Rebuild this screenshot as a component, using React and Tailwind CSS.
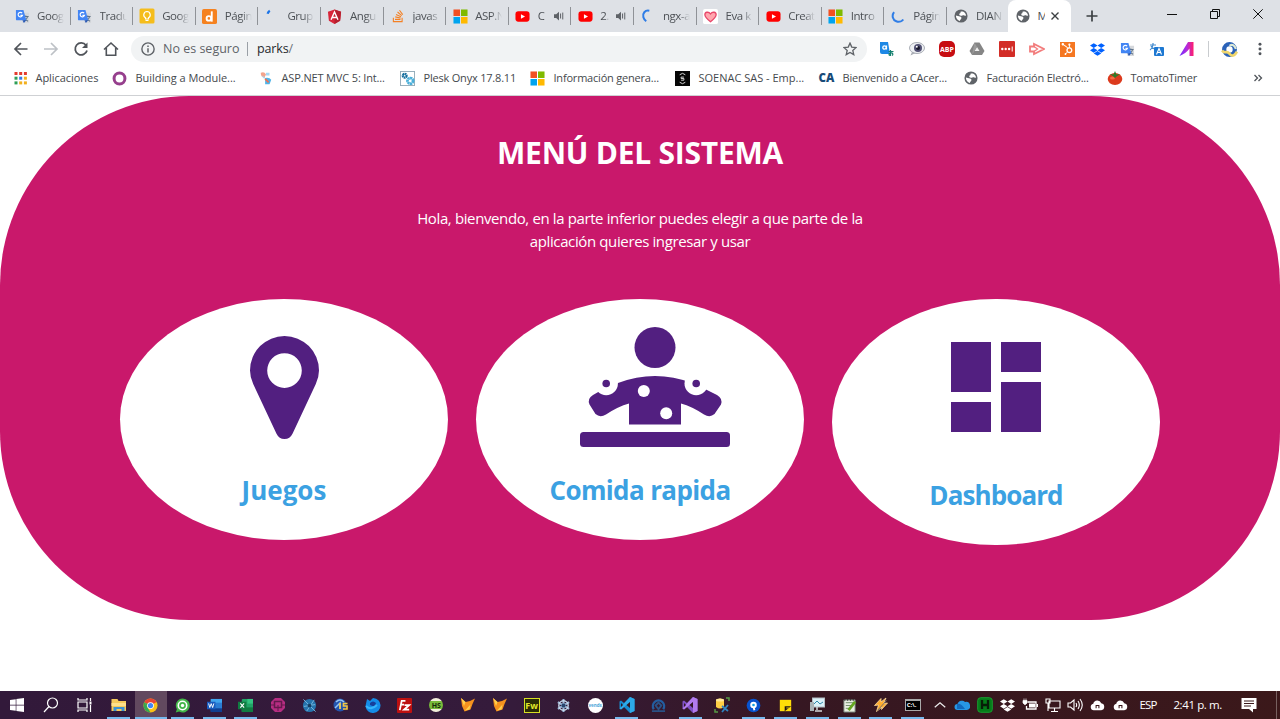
import React from "react";
import { FaWindows, FaDropbox, FaHubspot, FaStackOverflow } from "react-icons/fa";

function S({ w = 14, h, vb = "0 0 16 16", children }) {
  return (
    <svg width={w} height={h || w} viewBox={vb} className="block shrink-0" fill="none">
      {children}
    </svg>
  );
}

const GTranslate = () => (
  <S w={15}>
    <path d="M6 4h9v11H8z" fill="#d5d8dc" />
    <path d="M8.5 8h6M11.500 7v1.500M13.500 8c-.5 2.500-2 4-4 5M10 9.500c1 2 2.500 3 4 3.500" stroke="#607489" strokeWidth="1.200" />
    <path d="M1 1h8l3 11H1.500Q1 12 1 11z" fill="#4285f4" />
    <path d="M7.600 4.400A2.400 2.400 0 1 0 8 6.800H5.800" stroke="#fff" strokeWidth="1.200" />
    <path d="M8 12h4l-2.500 3z" fill="#2859b8" />
  </S>
);
const Keep = () => (
  <S w={16}>
    <rect x=".5" y=".5" width="15" height="15" rx="1.500" fill="#f5bd1c" />
    <path d="M8 3.500a3.300 3.300 0 0 0-1.500 6.200V11h3V9.700A3.300 3.300 0 0 0 8 3.500zM6.500 12.500h3" stroke="#fff" strokeWidth="1.200" />
  </S>
);
const OrangeD = () => (
  <S w={15}>
    <rect width="16" height="16" rx="2" fill="#f58220" />
    <circle cx="7.300" cy="10" r="2.400" stroke="#fff" strokeWidth="2" />
    <path d="M10.400 2.500v11" stroke="#fff" strokeWidth="2" />
  </S>
);
const BlueTick = () => (
  <S><path d="M3 5.500c.3-1.500 1-2.500 2.500-3.500" stroke="#1a73e8" strokeWidth="2.600" /></S>
);
const Angular = () => (
  <S w={15}>
    <path d="M8 .5l7 2.500-1 9.500L8 16l-6-3.500L1 3z" fill="#d8263a" />
    <path d="M8 .5l7 2.500-1 9.500L8 16z" fill="#b5202f" />
    <path d="M4.300 11.500L8 3.200l3.700 8.300M5.800 9h4.400" stroke="#fff" strokeWidth="1.500" />
  </S>
);
const Stack = () => <FaStackOverflow className="block size-[14px] text-[#f48024]" />;
const Microsoft = () => (
  <S w={15}>
    <path d="M.5.500h7v7h-7z" fill="#f25022" /><path d="M8.500.500h7v7h-7z" fill="#7fba00" />
    <path d="M.5 8.500h7v7h-7z" fill="#00a4ef" /><path d="M8.500 8.500h7v7h-7z" fill="#ffb900" />
  </S>
);
const YouTube = () => (
  <S w={15}>
    <rect x=".5" y="2.500" width="15" height="11" rx="3" fill="#f00" />
    <path d="M6.300 5.500v5L10.700 8z" fill="#fff" />
  </S>
);
const Spinner = () => (
  <S><path d="M9.500 2C4.500 1 1.500 5 2.700 9.500c.5 2 1.800 3.500 3.300 4.500" stroke="#2f7de6" strokeWidth="2.300" /></S>
);
const SpinnerLow = () => (
  <S><path d="M3.500 3.500c-3 4-1.500 9 2.500 10.500s7-.5 8-2" stroke="#2f7de6" strokeWidth="2.300" /></S>
);
const Heart = () => (
  <S w={15}>
    <rect width="16" height="16" rx="2" fill="#fff" />
    <path d="M8 13.500C4 10.500 2 8.500 2 6.200 2 3 6 2.500 8 5.200 10 2.500 14 3 14 6.200c0 2.300-2 4.300-6 7.300z" fill="#ffa6ae" stroke="#e8476a" strokeWidth="1.400" />
  </S>
);
const Globe = () => (
  <S w={14}>
    <circle cx="8" cy="8" r="7.500" fill="#5f6368" />
    <path d="M7.500 3.200C9 2.500 11 3 12.500 4.500c.8 1 1.200 2 1.200 3-1.200.8-1.700-.5-3-.5-1 0-1.200 1-2.700.8C6.500 7.500 5.800 7 6 5.500c.8-.3 1.700-.8 1.500-2.300zM2.200 7.500l4.600 1.200c1.500.3 2 1.300 1.500 2.300-.6 1-1.500 1-1.500 2.600C4 13 2 10.500 2.200 7.500z" fill="#fff" />
  </S>
);
const Speaker = () => (
  <S w={10} h={10}>
    <path d="M0 5h3.500l4.500-4v14l-4.500-4H0z" fill="#5f6368" />
    <path d="M10.500 4v8M14 2.500v11" stroke="#5f6368" strokeWidth="1.600" />
  </S>
);

const tabs = [
  [GTranslate, "Goog"], [GTranslate, "Tradu"], [Keep, "Goog"], [OrangeD, "Págin"], [BlueTick, "Grup"],
  [Angular, "Angu"], [Stack, "javas"], [Microsoft, "ASP.N"], [YouTube, "C", true], [YouTube, "2.", true],
  [Spinner, "ngx-a"], [Heart, "Eva k"], [YouTube, "Creat"], [Microsoft, "Intro"], [SpinnerLow, "Págin"], [Globe, "DIAN"],
];

function TabStrip() {
  return (
    <div className="flex h-8 bg-[#dee1e6] pl-2">
      {tabs.map(([Icon, label, sound], i) => (
        <div key={i} className="flex h-full w-[62.600px] shrink-0 items-center pl-[6px]">
          <span className="flex w-4 justify-center"><Icon /></span>
          <span className={(sound ? "w-[9px]" : "w-[27px]") + " ml-[7px] overflow-hidden whitespace-nowrap text-[11.500px] text-[#4d5156] tracking-[-0.450px] [mask-image:linear-gradient(to_right,black_60%,transparent)]"}>{label}</span>
          {sound && <span className="ml-[7px]"><Speaker /></span>}
          {i < 15 && <span className="ml-auto h-[18px] w-px bg-[#8f9297]" />}
        </div>
      ))}
      <div className="-ml-[2px] flex h-8 w-[63px] shrink-0 items-center rounded-t-lg bg-white pl-[8px]">
        <Globe />
        <span className="ml-2 w-[7px] overflow-hidden text-[11.500px] text-[#4d5156]">M</span>
        <span className="ml-[5px]"><S w={10} vb="0 0 10 10"><path d="M1.500 1.500l7 7m0-7l-7 7" stroke="#3c4043" strokeWidth="1.400" /></S></span>
      </div>
      <div className="flex flex-1 items-center pl-[15px]">
        <S w={12} vb="0 0 12 12"><path d="M6 .5v11M.5 6h11" stroke="#3c4043" strokeWidth="1.700" /></S>
        <div className="ml-auto flex items-center gap-[33px] pr-[17px] pb-[5px]">
          <S w={10} vb="0 0 10 10"><path d="M0 5.500h10" stroke="#111" /></S>
          <S w={10} vb="0 0 10 10"><path d="M.5 2.500h7v7h-7zM2.500 2.500v-2h7v7h-2" stroke="#111" /></S>
          <S w={10} vb="0 0 10 10"><path d="M.3.300l9.400 9.400m0-9.400L.3 9.700" stroke="#111" /></S>
        </div>
      </div>
    </div>
  );
}

const extensions = [
  <S key="0" w={16}><path d="M1 1h8l2 12H3Q1 13 1 11z" fill="#1e88e5" /><circle cx="5.500" cy="6.500" r="1.700" stroke="#fff" strokeWidth="1.300" /><path d="M7.500 4.500v4" stroke="#fff" strokeWidth="1.200" /><path d="M9.500 10.500h5M11.500 9v5.500c-2 0-2-2 0-2.500 2.500-.5 3 1.500 1.500 2.500" stroke="#14806f" strokeWidth="1.200" /></S>,
  <S key="1" w={16}><ellipse cx="8" cy="7" rx="7.500" ry="5.500" fill="#eef0f4" stroke="#a9adb5" /><path d="M3 11l-1.500 3.500 5-2.500" fill="#a9adb5" /><circle cx="9" cy="7" r="4" fill="#525173" /><circle cx="9" cy="7" r="2" fill="#17172b" /><circle cx="7.800" cy="5.800" r="1" fill="#fff" /></S>,
  <span key="2" className="flex size-4 items-center justify-center rounded-[5px] bg-[#c70d12] text-[7px] font-bold leading-none text-white">ABP</span>,
  <S key="3" w={16}><path d="M5.500 1.500h5L15.500 10 13 14H3L.5 10z" fill="#858585" /><path d="M8 6l2.500 4h-5z" fill="#eee" /><path d="M5.500 1.500L8 6 3 14" fill="#9b9b9b" /></S>,
  <S key="4" w={16}><rect width="16" height="16" rx="1" fill="#d32d27" /><circle cx="3.300" cy="8" r="1.200" fill="#fff" /><circle cx="6.700" cy="8" r="1.200" fill="#fff" /><circle cx="10.100" cy="8" r="1.200" fill="#fff" /><path d="M13.200 5.500v5" stroke="#fff" /></S>,
  <S key="5" w={16}><path d="M1 5.500h4V3l10 5-10 5v-2.500H1z" stroke="#f27c7c" strokeWidth="1.800" /><path d="M5 5.500L8.500 8 5 10.500" stroke="#f27c7c" strokeWidth="1.300" /></S>,
  <span key="6" className="flex size-[15px] items-center justify-center bg-[#f57722]"><FaHubspot className="size-3 text-white" /></span>,
  <FaDropbox key="7" className="size-[15px] text-[#0061ff]" />,
  <GTranslate key="8" />,
  <S key="9" w={16}><path d="M1 4h6M4 2v2c-.5 2.500-1.500 4-3 5M2 5c1 2 3 3 5 4" stroke="#448ccf" strokeWidth="1.200" /><rect x="5" y="6" width="10" height="9" rx="1" fill="#1d78d2" /><path d="M7.500 13.500L10 7.500l2.500 6M8.500 11.500h3" stroke="#fff" strokeWidth="1.100" /></S>,
  <S key="10" w={16}><defs><linearGradient id="violet" x1="0" x2="1"><stop stopColor="#6a2dff" /><stop offset=".5" stopColor="#b02be0" /><stop offset="1" stopColor="#ff1e6c" /></linearGradient></defs><path d="M.5 15L9 1h5.500v14h-4V7.500Q7 12.500 .5 15z" fill="url(#violet)" /></S>,
];

function Toolbar() {
  return (
    <div className="flex h-[33px] items-center bg-white pl-[13px] pt-px">
      <div className="flex w-[118px] items-center gap-[14px]">
        <S w={16}><path d="M14.500 8H2M8 2L2 8l6 6" stroke="#50545a" strokeWidth="1.700" /></S>
        <S w={16}><path d="M1 8h13M8 2l6 6-6 6" stroke="#bdc1c6" strokeWidth="1.700" /></S>
        <S w={16}><path d="M13 4.300A6 6 0 1 0 14 9.500" stroke="#50545a" strokeWidth="1.800" /><path d="M14.500 1.500V7H9z" fill="#50545a" /></S>
        <S w={16}><path d="M1 8.500L8 2l7 6.500M3.300 7v7.300h9.400V7" stroke="#50545a" strokeWidth="1.600" /></S>
      </div>
      <div className="flex h-[26px] w-[736px] items-center rounded-full bg-[#f1f3f4] pl-[10px] pr-[10px]">
        <S w={14}><circle cx="8" cy="8" r="7" stroke="#5f6368" strokeWidth="1.600" /><path d="M8 7v5M8 4v1.700" stroke="#5f6368" strokeWidth="1.700" /></S>
        <span className="ml-2 w-[77px] whitespace-nowrap text-[12.500px] text-[#5f6368]">No es seguro</span>
        <span className="ml-[7px] h-[14px] w-px bg-[#9aa0a6]" />
        <span className="ml-[9px] text-[12.500px] tracking-[-0.150px] text-[#26292d]">parks<span className="text-[#6f7479]">/</span></span>
        <span className="ml-auto"><S w={14}><path d="M8 1.300l2 4.500 5 .5-3.800 3.300 1.100 4.900L8 12l-4.300 2.500 1.100-4.900L1 6.300l5-.5z" stroke="#5f6368" strokeWidth="1.500" /></S></span>
      </div>
      <div className="ml-[5px] flex w-[330px] items-center">
        {extensions.map((e, i) => <span key={i} className="flex w-[30px] justify-center">{e}</span>)}
      </div>
      <span className="ml-[6px] h-4 w-px bg-[#c9cccf]" />
      <span className="ml-[12px]"><S w={17}><circle cx="8" cy="8" r="5" stroke="#2b62b8" strokeWidth="4" /><path d="M1 9c3 4 4-1 7 3s6 0 7-2" stroke="#f0d66c" strokeWidth="2.500" /><path d="M8 4.500c3-2 5 0 6 3" stroke="#dce9d5" strokeWidth="2" /></S></span>
      <span className="ml-[15px]"><S w={14}><circle cx="8" cy="2.500" r="1.700" fill="#50545a" /><circle cx="8" cy="8" r="1.700" fill="#50545a" /><circle cx="8" cy="13.500" r="1.700" fill="#50545a" /></S></span>
    </div>
  );
}

const appColors = ["#e33b2e", "#e33b2e", "#e33b2e", "#2f9e57", "#3478e5", "#f2b01d", "#2f9e57", "#f2b01d", "#f2b01d"];
const bookmarks = [
  ["w-[99px]", <S key="a" vb="0 0 14 14">{appColors.map((c, i) => <rect key={i} x={.5 + (i % 3) * 4.7} y={1 + Math.floor(i / 3) * 4.7} width="3" height="3" fill={c} />)}</S>, "Aplicaciones", "tracking-[-0.050px]"],
  ["w-[146px]", <S key="a" w={15}><circle cx="8" cy="8" r="5.800" stroke="#963f8d" strokeWidth="3.200" /></S>, "Building a Module...", "tracking-[-0.050px]"],
  ["w-[142px]", <S key="a"><path d="M2 2q4-2 6 2l-2 4q-4-1-4-6z" fill="#f3a48d" /><path d="M8 2h4v3H8zM3 5l4 2-1 2z" fill="#a4d8f5" /><path d="M7 8q5-1 7 2l-2 5H7z" fill="#4eb4e9" /><path d="M7 9l4 4" stroke="#ee7052" strokeWidth="2" /></S>, "ASP.NET MVC 5: Int...", "tracking-[-0.150px]"],
  ["w-[130px]", <S key="a" w={15}><rect x=".5" y=".5" width="15" height="15" fill="#fff" stroke="#93abb8" /><circle cx="5" cy="5" r="2" stroke="#146d9d" strokeWidth="2.400" strokeDasharray="1.700 .4" /><circle cx="11" cy="10.500" r="3" stroke="#4aafd9" strokeWidth="3" strokeDasharray="2.300 .4" /></S>, "Plesk Onyx 17.8.11", "tracking-[-0.200px]"],
  ["w-[145px]", <Microsoft key="a" />, "Información genera...", "tracking-[-0.200px]"],
  ["w-[144px]", <S key="a" w={15}><rect width="16" height="16" fill="#060606" /><path d="M5 4l3-1.500L11 4M5 12l3 1.500 3-1.500M9.500 6.500h-3v1.500h3v1.800h-3" stroke="#ddd" strokeWidth="1" /></S>, "SOENAC SAS - Emp...", "tracking-[0px]"],
  ["w-[144px]", <span key="a" className="text-[11.500px] font-extrabold leading-none text-[#174a78]">CA</span>, "Bienvenido a CAcer...", "tracking-[-0.150px]"],
  ["w-[144px]", <Globe key="a" />, "Facturación Electró...", "tracking-[-0.200px]"],
  ["w-[146px]", <S key="a" w={16}><ellipse cx="8" cy="9" rx="7.300" ry="6" fill="#dc3a1d" /><ellipse cx="5.500" cy="8" rx="2.500" ry="1.500" fill="#f46d43" /><path d="M2.500 4l4 .5L8 1l1.500 3.500 4-.5-4 2.500L8 8 6.500 6.500z" fill="#2f7a28" /></S>, "TomatoTimer", "tracking-[-0.250px]"],
];

function BookmarkBar() {
  return (
    <div className="flex h-[31px] items-center border-b border-[#cfd1d4] bg-white pb-[4px] pl-[13px]">
      {bookmarks.map(([w, icon, label, tr], i) => (
        <div key={i} className={"flex shrink-0 items-center " + w}>
          <span className="flex w-[15px] justify-center">{icon}</span>
          <span className={"whitespace-nowrap text-[11px] text-[#45494d] " + tr + (i ? " ml-[8.500px]" : " ml-[7.500px]")}>{label}</span>
        </div>
      ))}
      <span className="ml-auto pr-[17px]"><S w={10} vb="0 0 10 10"><path d="M1.500 2l3 3-3 3M5.500 2l3 3-3 3" stroke="#50545a" strokeWidth="1.300" /></S></span>
    </div>
  );
}

const Pin = () => (
  <svg width="69" height="103" viewBox="0 0 69 103" className="block">
    <path fillRule="evenodd" fill="#521f80" d="M34.500 0A34.500 34.500 0 0 0 0 34.500Q0 41 3.200 48L26.500 97.800Q29 103 34.500 103T42.500 97.800L65.800 48Q69 41 69 34.500A34.500 34.500 0 0 0 34.500 0zM34.500 17.300a17.300 17.300 0 1 1 0 34.600 17.300 17.300 0 0 1 0-34.600z" />
  </svg>
);

const Cook = () => (
  <svg width="150" height="120" viewBox="0 0 150 120" className="block">
    <g fill="#521f80">
      <circle cx="75" cy="20.500" r="20.500" />
      <path d="M38 56Q75 42 112 56L126 62.500L137 68Q143 71.500 141 77.500L134.500 87Q130 91 124 87.500Q112 79.500 101 76.500V97.500H49V76.500Q38 79.500 26 87.500Q20 91 15.500 87L9.500 77.500Q7 71.500 13 68L20 64z" />
      <rect y="105" width="150" height="15" rx="3.500" />
    </g>
    <g fill="#fff">
      <circle cx="26.200" cy="56.500" r="11.700" /><circle cx="116.200" cy="56.500" r="11.700" />
      <circle cx="63.800" cy="64" r="6" /><circle cx="86.200" cy="86.300" r="6" />
    </g>
    <g fill="#521f80"><circle cx="26.200" cy="56.500" r="3.800" /><circle cx="116.200" cy="56.500" r="3.800" /></g>
  </svg>
);

const Grid = () => (
  <svg width="90" height="90" viewBox="0 0 90 90" className="block">
    <path fill="#521f80" d="M0 0h40v50H0zM50 0h40v30H50zM0 60h40v30H0zM50 40h40v50H50z" />
  </svg>
);

function Page() {
  return (
    <div className="h-[595px] bg-white">
      <main className="flex h-[523.500px] flex-col items-center rounded-[189px] bg-[#c9186b] text-white">
        <h1 className="mt-[34px] text-[30px] font-bold leading-[46px] tracking-[-0.250px]">MENÚ DEL SISTEMA</h1>
        <p className="mt-[31px] w-[480px] text-center text-[15px] leading-[22.500px] tracking-[-0.380px]">Hola, bienvendo, en la parte inferior puedes elegir a que parte de la<br />aplicación quieres ingresar y usar</p>
        <div className="mt-[46.500px] flex items-start gap-7">
          <div className="flex h-[241px] w-[328px] flex-col items-center rounded-[50%] bg-white pt-[37px]">
            <Pin />
            <h2 className="mt-[31px] text-[26px] font-bold leading-10 text-[#3ba1e2]">Juegos</h2>
          </div>
          <div className="flex h-[241px] w-[328px] flex-col items-center rounded-[50%] bg-white pt-[28px]">
            <div className="pl-[30px]"><Cook /></div>
            <h2 className="mt-[23px] text-[26px] font-bold leading-10 tracking-[-0.620px] text-[#3ba1e2]">Comida rapida</h2>
          </div>
          <div className="flex h-[246.500px] w-[328px] flex-col items-center rounded-[50%] bg-white pt-[43px]">
            <Grid />
            <h2 className="mt-[43px] text-[26px] font-bold leading-10 tracking-[-0.900px] text-[#3ba1e2]">Dashboard</h2>
          </div>
        </div>
      </main>
    </div>
  );
}

const Fox = () => <S w={16}><path d="M1 1l4.500 4L10 4l5-2.500-2.500 5.500-2 5.500-6 2L2 9z" fill="#f5921e" /><path d="M1 1l4.500 4L4 9zM5 13.500l5.500-6-1 5z" fill="#ffd04d" /></S>;
const VS = ({ c, d }) => <S w={16}><path d="M11 0l4.500 2v12L11 16 5 10l-3 2.500L.5 11.500v-7L2 3.500 5 6z" fill={c} /><path d="M11 0l4.500 2v12L11 16V5L5 10 2 12.500.5 11.500z" fill={d} /><path d="M11 5v6L7.500 8zM2 6v4l2-2z" fill="#321722" /></S>;

const apps = [
  [1, <S key="i" w={16}><path d="M.5 2h6l1 2H15v10H.5z" fill="#f5c95b" /><path d="M.5 6H15v3H.500z" fill="#ffe08a" /><path d="M2.500 14v-4h11v4h-3v-2h-5v2z" fill="#3b92d4" /></S>],
  [1, <S key="i" w={15}><circle cx="8" cy="8" r="7.500" fill="#fbc116" /><path d="M8 8L1.500 4.300A7.500 7.500 0 0 1 14.500 4.300z" fill="#e94435" /><path d="M1.500 4.300L8 15.500A7.500 7.500 0 0 1 1.500 4.300" fill="#34a853" /><path d="M1.500 4.300L5 10.500 8 8z" fill="#34a853" /><path d="M14.500 4.300H8L4 5.500 1.500 4.300z" fill="#e94435" /><circle cx="8" cy="8" r="3.600" fill="#fff" /><circle cx="8" cy="8" r="2.800" fill="#4285f4" /></S>],
  [1, <S key="i" w={15}><path d="M8 .5a7.500 7.500 0 1 1-3.500 14L.8 15.500 2 12A7.500 7.500 0 0 1 8 .5" fill="#43b649" /><circle cx="8" cy="8" r="4.500" stroke="#fff" strokeWidth="1.700" /><circle cx="8" cy="8" r="1.800" fill="#fff" /></S>],
  [1, <S key="i" w={15}><rect x="4" y="1" width="12" height="14" rx="1" fill="#2b7cd3" /><path d="M4 1h12v4H4z" fill="#41a5ee" /><path d="M4 11h12v4H4z" fill="#103f91" /><path d="M0 4h9v8H0z" fill="#185abd" /><path d="M1.700 5.800l1.300 4.400L4.500 6l1.500 4.200 1.300-4.400" stroke="#fff" /></S>],
  [1, <S key="i" w={15}><rect x="4" y="1" width="12" height="14" rx="1" fill="#21a366" /><path d="M10 1h6v5h-6z" fill="#33c481" /><path d="M4 10h12v5H4z" fill="#107c41" /><path d="M0 4h9v8H0z" fill="#107c41" /><path d="M2.500 5.700l4 4.600m0-4.600l-4 4.600" stroke="#fff" strokeWidth="1.200" /></S>],
  [0, <S key="i" w={16}><path d="M5 1h6l4 4v6l-4 4H5l-4-4V5z" fill="#b62d82" /><rect x="4.500" y="4.500" width="7" height="6" stroke="#631a4c" strokeWidth="1.500" /><path d="M1 8h3m8 0h3M8 8v6" stroke="#631a4c" /></S>],
  [0, <S key="i" w={15}><circle cx="8" cy="8" r="7" fill="#2674ad" /><path d="M1.500 1.500l13 13M13 2l-8 12M2 9l12-2" stroke="#78b7dd" strokeWidth="1" /><circle cx="8" cy="8" r="2" fill="#153d62" /></S>],
  [0, <S key="i" w={16}><circle cx="7" cy="8" r="6.500" fill="#2455ae" /><path d="M3 5q4-4 8 0M2 11l5-5v6" stroke="#93c4f5" strokeWidth="1.500" /><path d="M7 6v6M14.500 6.500h-4V9h3.500v3H10" stroke="#f3c644" strokeWidth="1.600" /></S>],
  [0, <S key="i" w={16}><path d="M2 2l3 2 3-3q7 1 7.500 7A7.500 7.500 0 0 1 .5 9z" fill="#148ce8" /><path d="M5 6q3-3 6 0-1 5-6 2z" fill="#173f9b" /><path d="M1 9q5 5 11-1" stroke="#36b5fc" strokeWidth="2" /></S>],
  [0, <S key="i" w={15}><rect width="16" height="16" rx="1" fill="#bd1010" /><path d="M3 13L5 3h4M4 7h3.500M8 7.500h5l-5.500 5H13" stroke="#fff" strokeWidth="1.900" /></S>],
  [0, <span key="i" className="flex size-[14px] items-center justify-center rounded-full bg-[linear-gradient(#f2efdb_22%,#79bb3a_22%,#79bb3a_76%,#f2efdb_76%)] text-[7px] font-bold leading-none text-[#182909]">HS</span>],
  [0, <Fox key="i" />], [0, <Fox key="i" />],
  [0, <span key="i" className="flex h-[15px] w-4 items-center justify-center border border-[#d7df23] bg-[#2b2d06] text-[9px] font-bold leading-none text-[#e1e829]">Fw</span>],
  [0, <S key="i" w={15}><path d="M8 1v14M2 4.500l12 7M14 4.500l-12 7" stroke="#9cb8d8" strokeWidth="2.200" /><circle cx="8" cy="8" r="5" stroke="#c9dcf0" strokeWidth="1.500" /><circle cx="8" cy="8" r="2.200" fill="#27456e" /></S>],
  [0, <span key="i" className="flex size-[15px] items-center justify-center rounded-full bg-white text-[4.500px] font-bold leading-none text-[#4da6d9]">vends</span>],
  [1, <VS key="i" c="#168bd1" d="#2daae8" />],
  [0, <S key="i" w={15}><path d="M3 12A6 6 0 1 1 13 12" stroke="#235d9f" strokeWidth="2.500" /><path d="M5 8l3-3 3 3-3 4zM1 14h14" stroke="#2a5286" strokeWidth="2" /></S>],
  [1, <VS key="i" c="#8051c7" d="#b17bed" />],
  [0, <S key="i" w={16}><path d="M2 3q4-3 8 0v7q-4 3-8 0z" fill="#ffcf45" /><ellipse cx="6" cy="3" rx="4" ry="1.500" fill="#ffe797" /><path d="M8 9l6 5m0-6l-6 7" stroke="#2f83bf" strokeWidth="1.800" /><path d="M1 12v3h3M12 1h3v3" stroke="#559a45" strokeWidth="1.500" /></S>],
  [1, <S key="i" w={15}><circle cx="8" cy="8" r="7.300" fill="#0752ce" /><circle cx="8" cy="7.500" r="3.500" fill="#fff" /><path d="M8 9l1 4" stroke="#fff" strokeWidth="2" /><circle cx="8" cy="7.500" r="1.400" fill="#15a0e2" /></S>],
  [1, <S key="i" w={13}><path d="M1 1h14v14H1z" fill="#ffde08" /><path d="M7 15V9h8z" fill="#241817" /><path d="M9 11h4" stroke="#ffde08" /></S>],
  [1, <S key="i" w={16}><rect x="3.500" y="1" width="12" height="9" fill="#daf1f9" stroke="#b4bec4" /><path d="M5 7l3-3 3 3 3-2" stroke="#3289ac" /><path d="M1 5h4v9H1z" fill="#a9b2b7" /><path d="M8 10v3M6 14h7" stroke="#d4d8da" strokeWidth="1.500" /></S>],
  [1, <S key="i" w={15}><path d="M2 2h12v13H2z" fill="#e9efe2" stroke="#6f7770" /><path d="M4 5h8M4 8h6M4 11h5" stroke="#6e8b67" /><path d="M7 13l7-9" stroke="#64a51f" strokeWidth="3" /><path d="M3 1v2m3-2v2m3-2v2m3-2v2" stroke="#333" /></S>],
  [1, <S key="i" w={16}><path d="M8 1.500L1.500 8.500l4-.5-2 6.500L9 10l-.5 2.500L14.500 6l-4 .5L13 1 8 5z" fill="#ffad2f" stroke="#ffdda0" strokeWidth=".8" /><path d="M4.500 13.500l9-10" stroke="#77706a" /></S>],
  [1, <span key="i" className="flex h-3 w-4 items-end border border-[#aaa] border-t-2 bg-black pb-px pl-px text-[6px] font-bold leading-[7px] text-white">C:\.</span>],
];

const CloudP = () => <S w={15}><path d="M4 13a3.500 3.500 0 0 1-.5-6.900A4.500 4.500 0 0 1 12 5.500 3.800 3.800 0 0 1 12 13z" fill="#fff" /><path d="M6.500 11V8h3v3" stroke="#3a1618" strokeWidth="1.100" /></S>;
const tray = [
  <S key="0" w={12}><path d="M1 11l7-6 7 6" stroke="#eee" strokeWidth="1.600" /></S>,
  <S key="1" w={16}><path d="M3.500 13a3 3 0 0 1 0-6A4.500 4.500 0 0 1 11 5a4 4 0 0 1 2 8z" fill="#2796e5" /><path d="M3 7q4-1 8 5H3z" fill="#1269bd" /></S>,
  <S key="2" w={16}><rect x=".7" y=".7" width="14.600" height="14.600" rx="3" fill="#057b19" stroke="#179e30" /><path d="M5 3v9m6-9v9M5 8h6" stroke="#071d08" strokeWidth="2.300" /></S>,
  <FaDropbox key="3" className="size-[15px] text-white" />,
  <S key="4" w={16}><path d="M5.500 5H14v7H4.500V9M15.500 7v3" stroke="#fff" strokeWidth="1.300" /><path d="M7 6.500h6v4H7z" fill="#fff" /><path d="M1 3.500h4V6L3.500 7.500h-1L1 6zM2 1.500v2m2-2v2" fill="#fff" stroke="#fff" strokeWidth=".7" /></S>,
  <S key="5" w={16}><path d="M4 4h11v7H4zM9.500 11v3M6 14.500h7M1 2h4v4H1zM3 6v8" stroke="#fff" strokeWidth="1.100" /></S>,
  <S key="6" w={16}><path d="M1 6h2.500L7 3v10l-3.500-3H1zM9 6q1.300 2 0 4M11 4q2.700 4 0 8M13 2q4.500 6 0 12" stroke="#fff" strokeWidth="1.100" /></S>,
  <CloudP key="7" />, <CloudP key="8" />,
];

function Taskbar() {
  return (
    <div className="flex h-7 items-stretch bg-[linear-gradient(90deg,#32193a_0%,#351b3b_40%,#361722_62%,#3b181a_100%)] text-white">
      <div className="flex w-[103px] items-center">
        <span className="flex w-[34px] justify-center"><FaWindows className="size-[16px]" /></span>
        <span className="flex w-[33px] justify-center"><S w={16}><circle cx="9.500" cy="6" r="5" stroke="#fff" strokeWidth="1.200" /><path d="M6 9.500L1 15" stroke="#fff" strokeWidth="1.200" /></S></span>
        <span className="flex w-[35px] justify-center"><S w={16}><path d="M1 5h9v6H1zM1 1v2h9V1M1 15v-2h9v2M13.500 1v3m0 4v7" stroke="#fff" strokeWidth="1.200" /><path d="M12.500 4.500h2v3h-2z" fill="#fff" /></S></span>
      </div>
      {apps.map(([open, icon], i) => (
        <div key={i} className={"flex w-[31.750px] shrink-0 flex-col items-center " + (i === 1 ? "bg-[#62495f]" : "")}>
          <div className="flex h-[26px] items-center pt-[2px]">{icon}</div>
          {open ? <div className={(i === 1 ? "w-full" : "w-[23px]") + " h-[2px] bg-[#76b9ed]"} /> : null}
        </div>
      ))}
      <div className="flex items-center">
        {tray.map((t, i) => <span key={i} className="flex w-[22.550px] justify-center">{t}</span>)}
      </div>
      <span className="ml-[8px] w-[34px] whitespace-nowrap text-[11.500px] leading-[28px] tracking-[-0.800px]">ESP</span>
      <span className="w-[66px] whitespace-nowrap text-[11.500px] leading-[28px] tracking-[-0.400px]">2:41 p. m.</span>
      <span className="ml-[2px] flex items-center"><S w={16}><path d="M.5 1h15v11H12v3.500L8 12H.5z" fill="#fff" /><path d="M3 4h10M3 6.500h10M3 9h7" stroke="#3b181a" /></S></span>
      <span className="ml-auto mr-[3px] w-px bg-[#77605f]" />
    </div>
  );
}

export default function App() {
  return (
    <div className="flex h-[719px] w-[1280px] flex-col overflow-hidden bg-white font-['Open_Sans','Noto_Sans',sans-serif]">
      <TabStrip />
      <Toolbar />
      <BookmarkBar />
      <Page />
      <Taskbar />
    </div>
  );
}
